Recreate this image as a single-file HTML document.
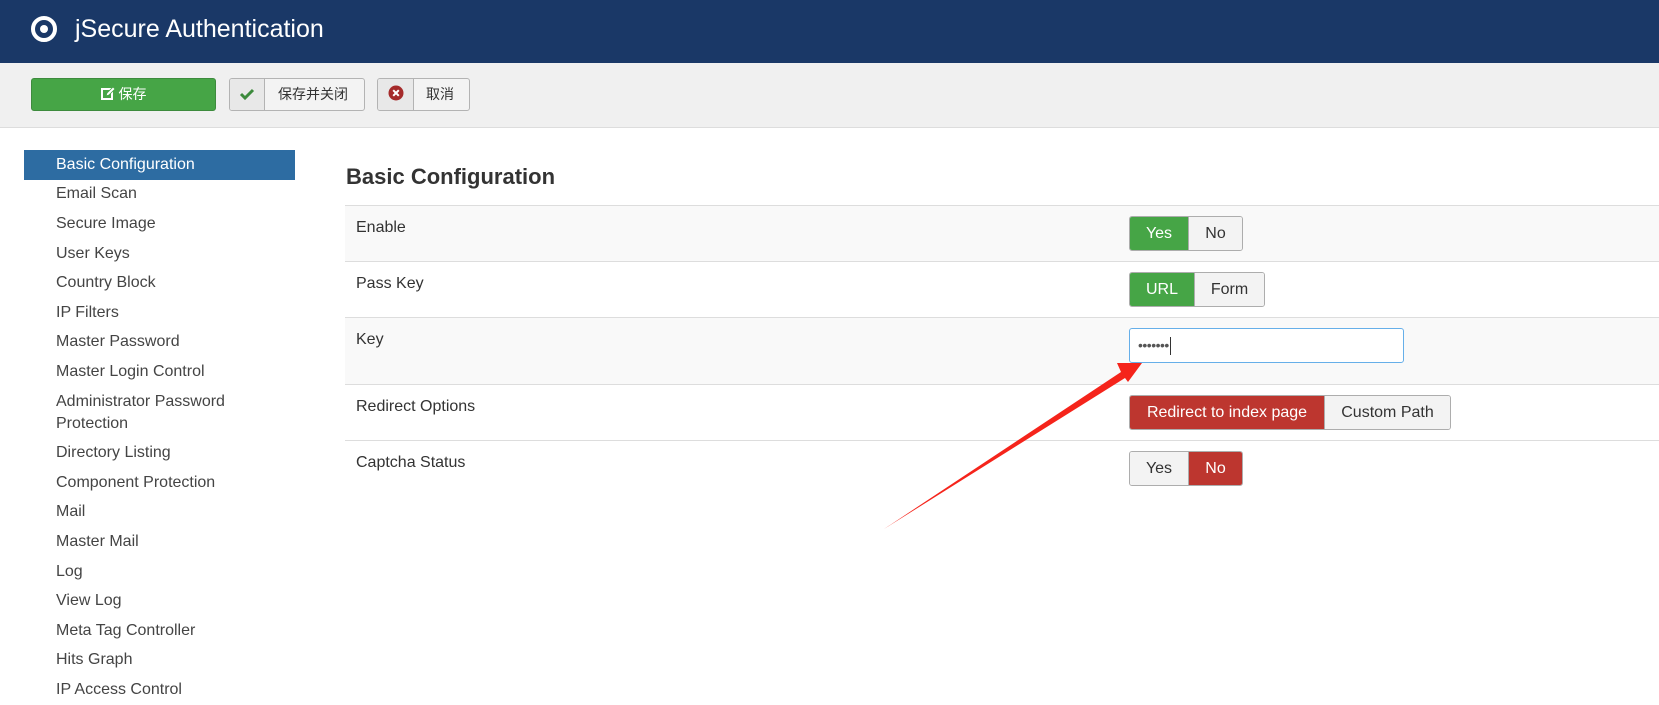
<!DOCTYPE html>
<html><head><meta charset="utf-8"><style>
*{box-sizing:border-box;margin:0;padding:0}
body{width:1659px;height:685px;overflow:hidden;background:#fff;font-family:"Liberation Sans","Noto Sans CJK SC",sans-serif;color:#333;position:relative}
.hdr{position:absolute;left:0;top:0;width:1659px;height:63px;background:#1a3867}
.hdr .t{position:absolute;left:75px;top:14px;color:#fff;font-size:25px;line-height:30px}
.logo{position:absolute;left:31px;top:16px;width:26px;height:26px;border:4px solid #fff;border-radius:50%}
.logo:after{content:"";position:absolute;left:5px;top:5px;width:8px;height:8px;border-radius:50%;background:#fff}
.tb{position:absolute;left:0;top:63px;width:1659px;height:65px;background:#f0f0f0;border-bottom:1px solid #ddd}
.b{position:absolute;top:78px;height:33px;border:1px solid #b3b3b3;border-radius:3px;background:#f3f3f3;font-size:14px;line-height:31px;color:#333;overflow:hidden}
.b .ic{position:absolute;left:0;top:0;height:31px;border-right:1px solid #b3b3b3;background:#e8e8e8}
.side{position:absolute;left:24px;top:150px;width:271px}
.side div{padding:3.8px 10px 3.8px 32px;font-size:16px;line-height:22px;color:#444}
.side .a{background:#2d6ca2;color:#fff}
h2{position:absolute;left:346px;top:163px;font-size:22px;line-height:28px;font-weight:bold;color:#333}
.row{position:absolute;left:345px;width:1314px;border-top:1px solid #ddd}
.row span{position:absolute;left:11px;font-size:16px;line-height:20px;color:#333}
.g{position:absolute;height:35px;border:1px solid #adadad;border-radius:3px;overflow:hidden;display:flex;font-size:16px}
.g div{height:33px;line-height:33px;text-align:center;background:#f3f3f3;color:#333}
.g .gr{background:#46a546;color:#fff}
.g .rd{background:#bd362f;color:#fff}
.g div+div{border-left:1px solid #adadad}
</style></head><body>
<div class="hdr"><div class="logo"></div><div class="t">jSecure Authentication</div></div>
<div class="tb"></div>
<div class="b" style="left:31px;width:185px;background:#46a546;border-color:#3d8b3d;color:#fff;text-align:center">
<svg width="14" height="14" viewBox="0 0 14 14" style="vertical-align:-2px;margin-right:4px"><rect x="1" y="2" width="10" height="10" fill="none" stroke="#fff" stroke-width="2"/><path d="M5 9l1-3 6-6 2 2-6 6z" fill="#fff" stroke="#46a546" stroke-width="0.8"/></svg>保存</div>
<div class="b" style="left:229px;width:136px"><div class="ic" style="width:35px"><svg width="35" height="31" viewBox="0 0 35 31"><path d="M11 15l4 4 8-8" fill="none" stroke="#3c8a3c" stroke-width="3"/></svg></div><span style="position:absolute;left:48px">保存并关闭</span></div>
<div class="b" style="left:377px;width:93px"><div class="ic" style="width:36px"><svg width="36" height="31" viewBox="0 0 36 31"><circle cx="18" cy="14" r="7.5" fill="#a52a2a"/><path d="M15.2 11.2l5.6 5.6M20.8 11.2l-5.6 5.6" stroke="#fff" stroke-width="2"/></svg></div><span style="position:absolute;left:48px">取消</span></div>
<div class="side">
<div class="a">Basic Configuration</div><div>Email Scan</div><div>Secure Image</div><div>User Keys</div><div>Country Block</div><div>IP Filters</div><div>Master Password</div><div>Master Login Control</div><div>Administrator Password Protection</div><div>Directory Listing</div><div>Component Protection</div><div>Mail</div><div>Master Mail</div><div>Log</div><div>View Log</div><div>Meta Tag Controller</div><div>Hits Graph</div><div>IP Access Control</div>
</div>
<h2>Basic Configuration</h2>
<div class="row" style="top:205px;height:56px;background:#f9f9f9"><span style="top:12px">Enable</span></div>
<div class="row" style="top:261px;height:56px"><span style="top:12px">Pass Key</span></div>
<div class="row" style="top:317px;height:67px;background:#f9f9f9"><span style="top:12px">Key</span></div>
<div class="row" style="top:384px;height:56px"><span style="top:12px">Redirect Options</span></div>
<div class="row" style="top:440px;height:56px"><span style="top:12px">Captcha Status</span></div>
<div class="g" style="left:1129px;top:216px"><div class="gr" style="width:58px">Yes</div><div style="width:54px">No</div></div>
<div class="g" style="left:1129px;top:272px"><div class="gr" style="width:64px">URL</div><div style="width:70px">Form</div></div>
<div style="position:absolute;left:1129px;top:328px;width:275px;height:35px;border:1px solid #66afe9;border-radius:3px;background:#fff;font-size:14px;line-height:33px;padding-left:8px;color:#555;letter-spacing:-0.5px">•••••••<span style="display:inline-block;width:1px;height:18px;background:#333;vertical-align:middle;margin-left:1px"></span></div>
<div class="g" style="left:1129px;top:395px"><div class="rd" style="width:194px">Redirect to index page</div><div style="width:126px">Custom Path</div></div>
<div class="g" style="left:1129px;top:451px"><div style="width:58px">Yes</div><div class="rd" style="width:54px">No</div></div>
<svg style="position:absolute;left:0;top:0" width="1659" height="685"><polygon points="884,529 1121,372 1117,363 1142,363 1128,382 1125,378" fill="#f5241b"/></svg>
</body></html>
